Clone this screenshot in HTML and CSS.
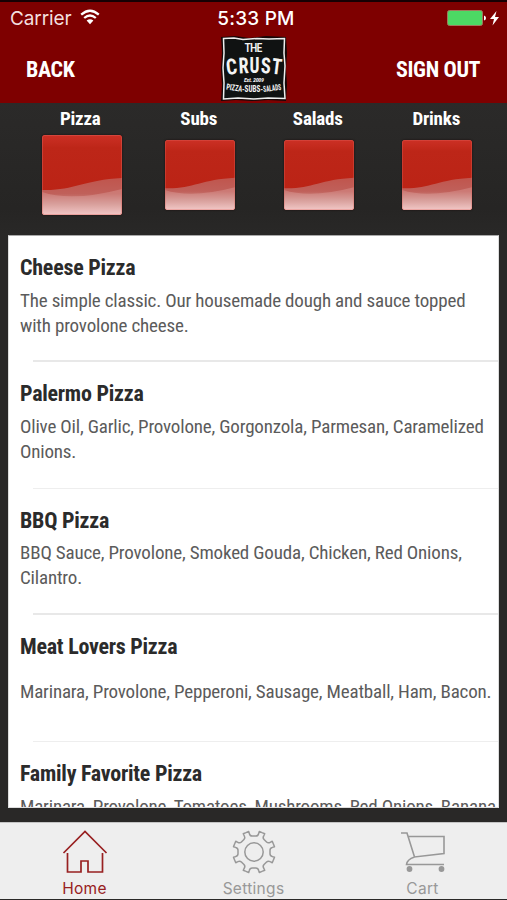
FILE: index.html
```html
<!DOCTYPE html>
<html lang="en">
<head>
<meta charset="utf-8">
<title>The Crust</title>
<link rel="stylesheet" href="styles.css">
</head>
<body>
<div class="app">
  <header class="top">
    <div class="status">
      <div class="status-left"><span class="carrier">Carrier</span>
        <svg class="wifi" width="20" height="16" viewBox="0 0 20 16"><g fill="none" stroke="#fff" stroke-width="2.3"><path d="M1.2 5.6Q10-2.2 18.8 5.6"/><path d="M4.2 9Q10 4 15.8 9"/></g><path d="M6.6 11.6Q10 8.8 13.4 11.6L10 15.2z" fill="#fff"/></svg>
      </div>
      <span class="clock">5:33 PM</span>
      <div class="status-right">
        <svg width="54" height="18" viewBox="0 0 54 18"><rect x="1.500" y=".5" width="35" height="15" rx="2" fill="#4cd964" stroke="#a2785d"/><path d="M38 5.500q2 .5 2 2.500t-2 2.500z" fill="#fff"/><path d="M50.500 1L44 9h4L46.500 15.500 53 7h-4z" fill="#fff"/></svg>
      </div>
    </div>
    <nav class="bar">
      <span class="nav-link">BACK</span>
      <svg class="logo" width="68" height="67" viewBox="0 0 68 67">
        <path d="M1 2L15 1 29 3 46 1 66 2 67 18 66 34 67 50 66 66 48 65 32 66 16 65 1 66 2 50 1 34 2 17z" fill="#160707"/>
        <path d="M3.500 3.500L14 3 23 4.500 37 3.500 49 4 64.500 3.500 64 18 65 31 64 48 65 63.500 48 63 34 64 18 63 3.500 64 4 48 3 33 4 18z" fill="#101212" stroke="#eee" stroke-width="1.500"/>
        <g class="logo-text">
          <text x="24.500" y="16.500" font-size="12" textLength="18" class="light">THE</text>
          <g font-size="22"><text transform="translate(7 40) rotate(-7)" textLength="11" lengthAdjust="spacingAndGlyphs">C</text><text transform="translate(19 38.500) rotate(-3)" textLength="10" lengthAdjust="spacingAndGlyphs">R</text><text x="29.500" y="38" textLength="10" lengthAdjust="spacingAndGlyphs">U</text><text transform="translate(40.500 38) rotate(3)" textLength="10" lengthAdjust="spacingAndGlyphs">S</text><text transform="translate(51 38.500) rotate(7)" textLength="10" lengthAdjust="spacingAndGlyphs">T</text></g>
          <text class="est" x="24" y="46.500" font-size="6" textLength="20">Est. 2009</text>
          <g font-size="8.500"><text transform="translate(6 54.500) rotate(8)" textLength="16" lengthAdjust="spacingAndGlyphs">PIZZA</text><text x="22" y="57" textLength="21" lengthAdjust="spacingAndGlyphs">-SUBS-</text><text transform="translate(43.500 57) rotate(-7)" textLength="18" lengthAdjust="spacingAndGlyphs">SALADS</text></g>
        </g>
      </svg>
      <span class="nav-link">SIGN OUT</span>
    </nav>
  </header>

  <svg class="defs" width="0" height="0">
    <defs>
      <linearGradient id="red" x2="0" y2="1"><stop offset="0" stop-color="#cc3025"/><stop offset=".16" stop-color="#bd2618"/><stop offset="1" stop-color="#ba2214"/></linearGradient>
      <linearGradient id="shine" x2="0" y2="1"><stop offset="0" stop-color="#c0554d"/><stop offset=".42" stop-color="#c0605a"/><stop offset=".7" stop-color="#d0908b"/><stop offset="1" stop-color="#f0c4c3"/></linearGradient>
      <symbol id="tile" viewBox="0 0 80 80"><rect width="80" height="80" rx="2" fill="url(#red)"/><path d="M0 55C31 56 41 45 80 43V78q0 2-2 2H2q-2 0-2-2z" fill="url(#shine)"/><path d="M0 57Q30 67 80 54V78q0 2-2 2H2q-2 0-2-2z" fill="#f5d4d4" opacity=".22"/><rect x=".5" y=".5" width="79" height="79" rx="2" fill="none" stroke="#e1665e" stroke-opacity=".4"/></symbol>
    </defs>
  </svg>
  <section class="categories">
    <div class="category current"><span>Pizza</span><svg class="tile"><use href="#tile"/></svg></div>
    <div class="category"><span>Subs</span><svg class="tile"><use href="#tile"/></svg></div>
    <div class="category"><span>Salads</span><svg class="tile"><use href="#tile"/></svg></div>
    <div class="category"><span>Drinks</span><svg class="tile"><use href="#tile"/></svg></div>
  </section>

  <main class="menu">
    <article class="item"><h2>Cheese Pizza</h2><p>The simple classic. Our housemade dough and sauce topped<br>with provolone cheese.</p></article>
    <article class="item faint"><h2>Palermo Pizza</h2><p>Olive Oil, Garlic, Provolone, Gorgonzola, Parmesan, Caramelized<br>Onions.</p></article>
    <article class="item"><h2>BBQ Pizza</h2><p>BBQ Sauce, Provolone, Smoked Gouda, Chicken, Red Onions,<br>Cilantro.</p></article>
    <article class="item faint"><h2>Meat Lovers Pizza</h2><p>Marinara, Provolone, Pepperoni, Sausage, Meatball, Ham, Bacon.</p></article>
    <article class="item"><h2>Family Favorite Pizza</h2><p class="from-top">Marinara, Provolone, Tomatoes, Mushrooms, Red Onions, Banana</p></article>
  </main>

  <footer class="tabs">
    <div class="tab active">
      <svg width="46" height="44" viewBox="0 0 46 44"><path d="M1.500 23L23 1.500 44.500 23M5.500 23v19H19V31h7v11h14.500V23" fill="none" stroke="currentColor" stroke-width="1.700"/></svg>
      <span>Home</span>
    </div>
    <div class="tab">
      <svg width="46" height="44" viewBox="-23 -22 46 44"><defs><path id="notch" d="M-8.040-19.400L-5.300-20.500-4.600-18.300Q-4-16-1.800-16H1.800Q4-16 4.600-18.300L5.300-20.500 8.040-19.400"/></defs><g fill="none" stroke="currentColor" stroke-width="1.500" stroke-linejoin="round"><use href="#notch"/><use href="#notch" transform="rotate(45)"/><use href="#notch" transform="rotate(90)"/><use href="#notch" transform="rotate(135)"/><use href="#notch" transform="rotate(180)"/><use href="#notch" transform="rotate(225)"/><use href="#notch" transform="rotate(270)"/><use href="#notch" transform="rotate(315)"/><circle r="9.200"/></g></svg>
      <span>Settings</span>
    </div>
    <div class="tab">
      <svg width="46" height="44" viewBox="0 0 46 44"><path d="M1 3h6l7.500 24L44 23.500V6.500H8M14.500 27Q7 29.500 6.500 34.500H44" fill="none" stroke="currentColor" stroke-width="1.600"/><circle cx="9.500" cy="39" r="2.900" fill="currentColor"/><circle cx="41.500" cy="39" r="2.900" fill="currentColor"/></svg>
      <span>Cart</span>
    </div>
  </footer>
</div>
</body>
</html>
```
FILE: styles.css
```css
* { box-sizing: border-box; }
body { margin: 0; }
.app { width: 507px; height: 900px; display: flex; flex-direction: column; overflow: hidden; background: #292827; font-family: "Roboto Condensed", Roboto, "Liberation Sans", sans-serif; font-stretch: 75%; }
.top { height: 103px; background: #7e0000; border-top: 2px solid #160003; color: #fff; flex: none; }
.status { height: 33px; display: grid; grid-template-columns: 1fr auto 1fr; align-items: center; padding: 0 7px 0 10px; font-family: Inter, sans-serif; font-stretch: 100%; font-size: 19px; }
.status-left { display: flex; align-items: center; gap: 8px; }
.carrier { color: #f3dfdf; letter-spacing: -.1px; }
.wifi { margin-top: -3px; }
.clock { font-weight: 500; letter-spacing: .2px; margin-left: 2px; }
.status-right { display: flex; justify-content: flex-end; }
.bar { height: 66px; display: flex; justify-content: space-between; align-items: center; padding: 0 26px; }
.nav-link { width: 85px; padding-top: 2px; font-size: 22px; font-weight: 700; letter-spacing: -.35px; white-space: nowrap; }
.logo { margin-left: 1px; }
.logo-text { fill: #f4f4f4; font-weight: 700; }
.light { font-weight: 500; }
.est { font-style: italic; }
.defs { display: block; position: absolute; }
.categories { height: 132px; flex: none; display: grid; grid-template-columns: repeat(4, 118.500px); padding: 2px 0 0 22.500px; background: linear-gradient(#2b2a29, #262524 80%, #292827); }
.category { display: grid; grid-template-rows: 27px 85px; place-items: center; color: #fff; font-size: 19px; font-weight: 700; letter-spacing: -.2px; }
.category span { margin: -1px 3px 0 0; }
.category:nth-child(n+3) span { margin-right: 2px; }
.tile { width: 70px; height: 70px; box-shadow: 0 0 2px #190a09; border-radius: 2px; }
.current .tile { width: 80px; height: 80px; }
.menu { width: 491px; height: 573px; margin-left: 8px; flex: none; overflow: hidden; background: #fff; border: 1px solid #ddd; border-top-color: #aaa; }
.item { height: 126.400px; display: grid; grid-template-rows: 38px 50px; padding: 14px 0 0 11px; background: linear-gradient(#e8e8e8, #e8e8e8) 24px 100% / 100% 2px no-repeat; }
.faint { background-size: 100% 1px; background-image: linear-gradient(#eee, #eee); }
.item h2 { margin: 0; font-size: 22px; line-height: 36.500px; letter-spacing: -.25px; color: #2b2b2b; white-space: nowrap; }
.item p { margin: -1px 0 0; align-self: center; font-size: 19px; line-height: 25px; letter-spacing: -.175px; color: #5b5b5b; white-space: nowrap; }
.item .from-top { align-self: start; margin-top: 0; }
.tabs { height: 77px; margin-top: 14px; flex: none; display: grid; grid-template-columns: repeat(3, 1fr); background: #eee; border-top: 1px solid #c4c4c4; font-family: Inter, sans-serif; font-stretch: 100%; }
.tab { display: flex; flex-direction: column; align-items: center; padding-top: 7px; color: #989898; font-size: 15.500px; letter-spacing: .3px; }
.tab span { line-height: 20px; margin-top: 5px; }
.active { color: #982021; }
```
